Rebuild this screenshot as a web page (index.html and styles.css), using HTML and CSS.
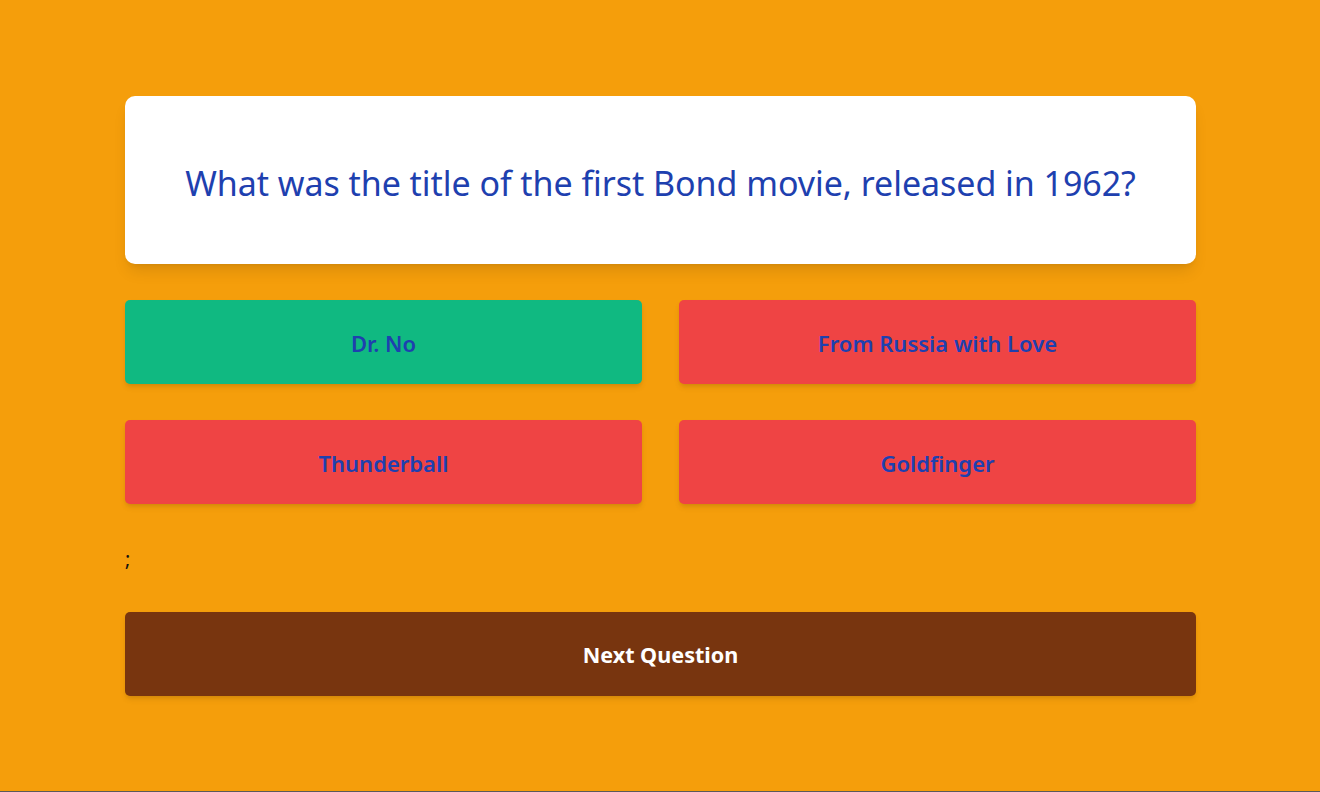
FILE: index.html
```html
<!DOCTYPE html>
<html lang="en">
<head>
<meta charset="utf-8">
<title>Quiz</title>
<link rel="stylesheet" href="styles.css">
</head>
<body>
<main class="page">
  <div class="quiz">
    <section class="question-card">
      <h1 class="question">What was the title of the first Bond movie, released in 1962?</h1>
    </section>
    <div class="answers">
      <button class="answer correct">Dr. No</button>
      <button class="answer wrong">From Russia with Love</button>
      <button class="answer wrong">Thunderball</button>
      <button class="answer wrong">Goldfinger</button>
    </div>
    <p class="stray">;</p>
    <button class="next">Next Question</button>
  </div>
</main>
</body>
</html>
```

FILE: styles.css
```css
* { box-sizing: border-box; }
html, body { margin: 0; padding: 0; }
body {
  background: #f59e0b;
  font-family: "Noto Sans", "Open Sans", sans-serif;
}
.page {
  min-height: 100vh;
  padding: 96px 124px 0 125px;
  border-bottom: 1px solid #5a5a5a;
}
.quiz {
  display: flex;
  flex-direction: column;
}
.question-card {
  background: #fff;
  border-radius: 10px;
  height: 168px;
  display: flex;
  align-items: center;
  justify-content: center;
  box-shadow: 0 10px 15px -3px rgba(0,0,0,0.1), 0 4px 6px -4px rgba(0,0,0,0.1);
}
.question {
  margin: 0;
  font-weight: 400;
  font-size: 34px;
  letter-spacing: -0.05px;
  color: #1e40af;
  text-align: center;
  padding-top: 5px;
}
.answers {
  margin-top: 36px;
  display: grid;
  grid-template-columns: 1fr 1fr;
  column-gap: 37px;
  row-gap: 36px;
}
.answer {
  height: 84px;
  border: 0;
  border-radius: 5px;
  padding-top: 3px;
  font-family: inherit;
  font-size: 22px;
  font-weight: 600;
  color: #1e40af;
  box-shadow: 0 4px 6px -1px rgba(0,0,0,0.1), 0 2px 4px -2px rgba(0,0,0,0.1);
  cursor: pointer;
}
.correct { background: #10b981; }
.wrong { background: #ef4444; }
.stray {
  margin: 40px 0 0 0;
  font-size: 20px;
  line-height: 30px;
  color: #111;
}
.next {
  margin-top: 38px;
  height: 84px;
  border: 0;
  border-radius: 5px;
  padding-top: 2px;
  background: #78350f;
  color: #fff;
  font-family: inherit;
  font-size: 21.6px;
  font-weight: 700;
  box-shadow: 0 4px 6px -1px rgba(0,0,0,0.1), 0 2px 4px -2px rgba(0,0,0,0.1);
}
```
